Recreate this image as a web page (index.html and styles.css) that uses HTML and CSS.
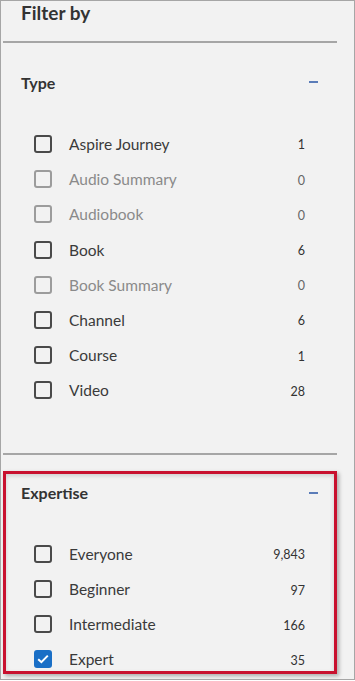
FILE: index.html
```html
<!DOCTYPE html>
<html lang="en">
<head>
  <meta charset="UTF-8">
  <title>Filter by</title>
  <link rel="stylesheet" href="styles.css">
</head>
<body>
  <aside class="panel">
    <div class="content">
      <h1 class="title">Filter by</h1>
      <hr class="divider">

      <section class="group">
        <div class="group-head">
          <h2>Type</h2>
          <span class="toggle"></span>
        </div>
        <ul class="options">
          <li class="row"><span class="box"></span><span class="name">Aspire Journey</span><span class="count">1</span></li>
          <li class="row disabled"><span class="box"></span><span class="name">Audio Summary</span><span class="count">0</span></li>
          <li class="row disabled"><span class="box"></span><span class="name">Audiobook</span><span class="count">0</span></li>
          <li class="row"><span class="box"></span><span class="name">Book</span><span class="count">6</span></li>
          <li class="row disabled"><span class="box"></span><span class="name">Book Summary</span><span class="count">0</span></li>
          <li class="row"><span class="box"></span><span class="name">Channel</span><span class="count">6</span></li>
          <li class="row"><span class="box"></span><span class="name">Course</span><span class="count">1</span></li>
          <li class="row"><span class="box"></span><span class="name">Video</span><span class="count">28</span></li>
        </ul>
      </section>

      <hr class="divider second">

      <section class="group highlighted">
        <div class="group-head">
          <h2>Expertise</h2>
          <span class="toggle"></span>
        </div>
        <ul class="options">
          <li class="row"><span class="box"></span><span class="name">Everyone</span><span class="count">9,843</span></li>
          <li class="row"><span class="box"></span><span class="name">Beginner</span><span class="count">97</span></li>
          <li class="row"><span class="box"></span><span class="name">Intermediate</span><span class="count">166</span></li>
          <li class="row"><span class="box checked"><svg width="12" height="10" viewBox="0 0 12 10"><path d="M1.2 5.2 L4.4 8.2 L10.8 1.6" fill="none" stroke="#fff" stroke-width="2"/></svg></span><span class="name">Expert</span><span class="count">35</span></li>
        </ul>
      </section>
    </div>
  </aside>
</body>
</html>
```

FILE: styles.css
```css
body { margin: 0; font-family: Lato, "Open Sans", sans-serif; color: #333; background: #fff; }
ul { list-style: none; margin: 0; padding: 0; }

.panel { box-sizing: border-box; width: 355px; height: 680px; border: 1px solid #a6a6a6; background: #f2f2f2; overflow: hidden; }
.content { width: 336px; }

.title { margin: 0; padding: 0 0 0 20px; height: 40px; font-size: 19px; line-height: 24px; font-weight: 700; color: #333; }

.divider { margin: 0 0 0 2px; height: 2px; border: 0; background: #a6a6a6; }
.divider.second { margin-top: 45px; }

.group { padding-top: 27px; }
.group-head { display: flex; align-items: center; justify-content: space-between; height: 24px; padding: 0 19px 0 20px; }
.group-head h2 { margin: 0; font-size: 16px; font-weight: 700; color: #333; }
.toggle { width: 9px; height: 2px; background: #5b7cb8; }

.options { padding-top: 32.4px; }
.row { display: flex; align-items: center; height: 35.2px; padding: 0 32px 0 33px; font-size: 15.5px; color: #3a3a3a; }
.box { box-sizing: border-box; width: 18px; height: 18px; border: 2px solid #4a4a4a; border-radius: 3px; display: flex; align-items: center; justify-content: center; }
.box.checked { background: #1a6fc6; border-color: #1a6fc6; }
.name { flex: 1; margin-left: 17px; }
.count { font-size: 12.5px; color: #333; padding-top: 2px; }
.disabled { color: #8a8a8a; }
.disabled .box { border-color: #9c9c9c; }
.disabled .count { color: #666; }

/* red annotation frame round the expertise block */
.highlighted { position: relative; box-sizing: border-box; height: 219px; padding-top: 26px; }
.highlighted .options { padding-top: 31.4px; }
.highlighted::after { content: ""; position: absolute; left: 2px; top: 16px; width: 334px; height: 203px; box-sizing: border-box; border: 3px solid #c8102e; box-shadow: 2px 2px 4px rgba(0,0,0,0.3), inset 0 2px 4px rgba(0,0,0,0.15); pointer-events: none; }
```
